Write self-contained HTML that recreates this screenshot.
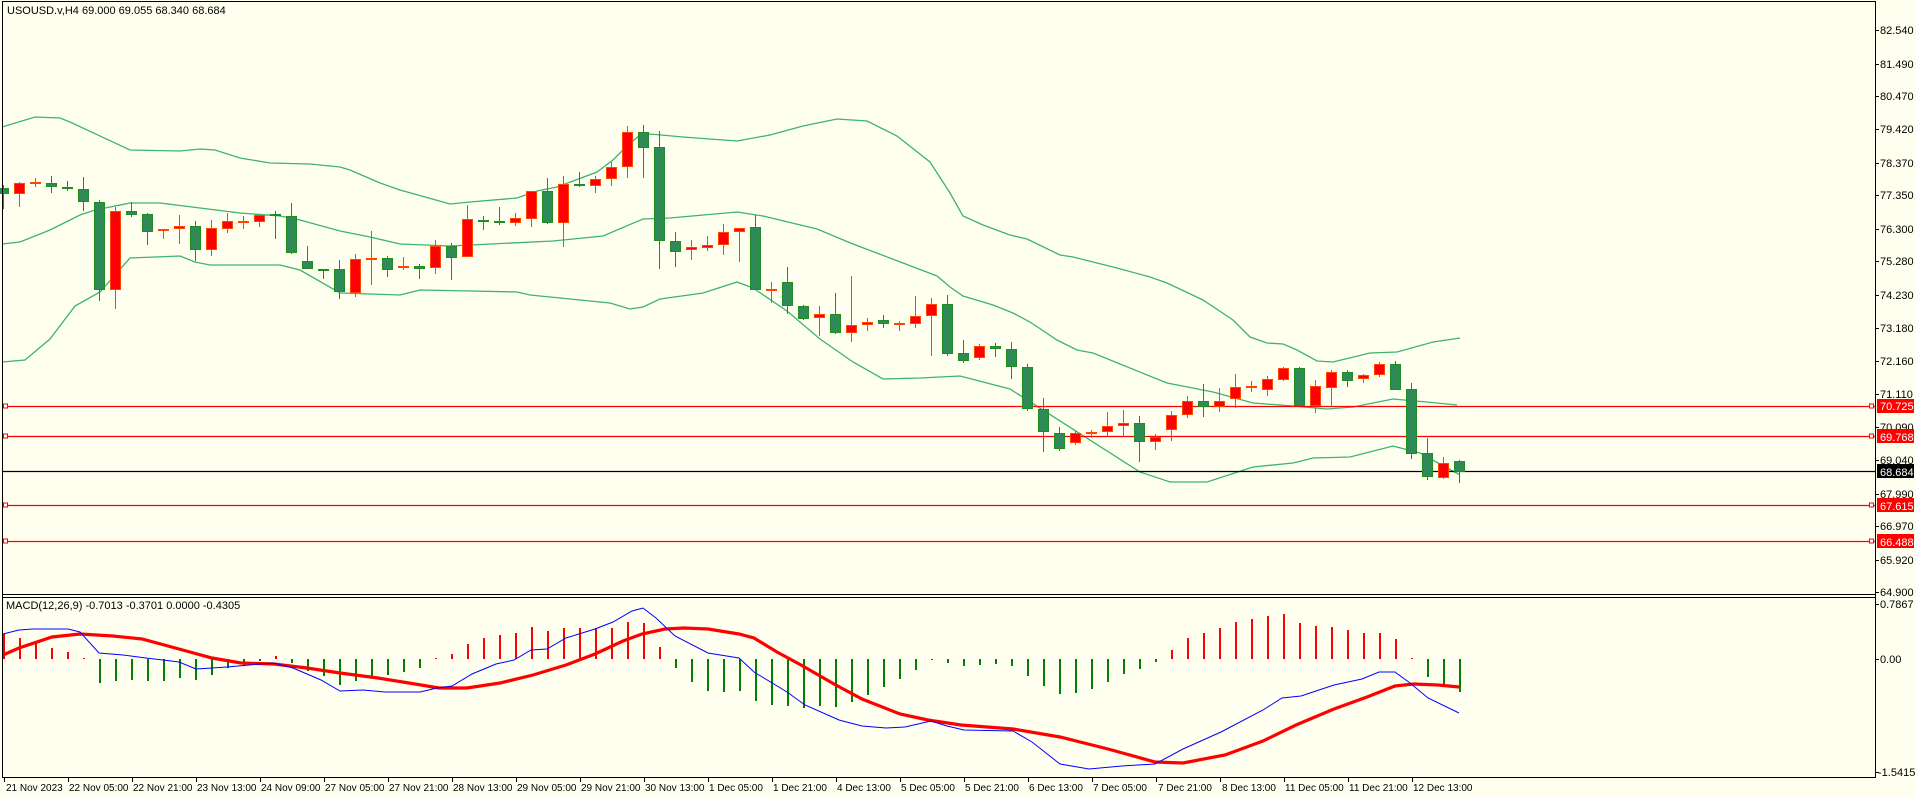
<!DOCTYPE html>
<html><head><meta charset="utf-8">
<style>
html,body{margin:0;padding:0;background:#FFFFF0;}
svg{display:block;}
text{font-family:"Liberation Sans",sans-serif;font-size:11px;fill:#000;}
#tl text{font-size:10px;}
</style></head>
<body>
<svg id="s" width="1916" height="798" viewBox="0 0 1916 798" xmlns="http://www.w3.org/2000/svg">
<rect width="1916" height="798" fill="#FFFFF0"/>
<g id="bands" fill="none" stroke="#3CB371" stroke-width="1.3"></g>
<g id="levels"></g>
<g id="candles" shape-rendering="crispEdges"></g>
<g id="macd"></g>
<g stroke="#000" stroke-width="1" shape-rendering="crispEdges" fill="none">
<line x1="2.5" y1="1" x2="2.5" y2="777"/>
<line x1="2" y1="1.5" x2="1876" y2="1.5"/>
<line x1="1875.5" y1="1" x2="1875.5" y2="778"/>
<line x1="2" y1="594.5" x2="1876" y2="594.5"/>
<line x1="2" y1="597.5" x2="1876" y2="597.5"/>
<line x1="2" y1="777.5" x2="1876" y2="777.5"/>
</g>
<g id="ticks" stroke="#000" shape-rendering="crispEdges"></g>
<text x="7" y="14">USOUSD.v,H4  69.000 69.055 68.340 68.684</text>
<text x="6" y="609">MACD(12,26,9) -0.7013 -0.3701 0.0000 -0.4305</text>
<g id="plabels">
<text x="1880" y="34">82.540</text>
<text x="1880" y="68">81.490</text>
<text x="1880" y="100">80.470</text>
<text x="1880" y="133">79.420</text>
<text x="1880" y="167">78.370</text>
<text x="1880" y="199">77.350</text>
<text x="1880" y="233">76.300</text>
<text x="1880" y="265">75.280</text>
<text x="1880" y="299">74.230</text>
<text x="1880" y="332">73.180</text>
<text x="1880" y="365">72.160</text>
<text x="1880" y="398">71.110</text>
<text x="1880" y="431">70.090</text>
<text x="1880" y="464">69.040</text>
<text x="1880" y="498">67.990</text>
<text x="1880" y="530">66.970</text>
<text x="1880" y="564">65.920</text>
<text x="1880" y="596">64.900</text>
<text x="1880" y="608">0.7867</text>
<text x="1880" y="663">0.00</text>
<text x="1878" y="776">-1.5415</text>
</g>
<g id="lvlbox"></g>
<g fill="#fff">
<text x="1880" y="410" style="fill:#fff">70.725</text>
<text x="1880" y="441" style="fill:#fff">69.768</text>
<text x="1880" y="476" style="fill:#fff">68.684</text>
<text x="1880" y="510" style="fill:#fff">67.615</text>
<text x="1880" y="546" style="fill:#fff">66.488</text>
</g>
<g id="tl">
<text x="6" y="791">21 Nov 2023</text>
<text x="69" y="791">22 Nov 05:00</text>
<text x="133" y="791">22 Nov 21:00</text>
<text x="197" y="791">23 Nov 13:00</text>
<text x="261" y="791">24 Nov 09:00</text>
<text x="325" y="791">27 Nov 05:00</text>
<text x="389" y="791">27 Nov 21:00</text>
<text x="453" y="791">28 Nov 13:00</text>
<text x="517" y="791">29 Nov 05:00</text>
<text x="581" y="791">29 Nov 21:00</text>
<text x="645" y="791">30 Nov 13:00</text>
<text x="709" y="791">1 Dec 05:00</text>
<text x="773" y="791">1 Dec 21:00</text>
<text x="837" y="791">4 Dec 13:00</text>
<text x="901" y="791">5 Dec 05:00</text>
<text x="965" y="791">5 Dec 21:00</text>
<text x="1029" y="791">6 Dec 13:00</text>
<text x="1093" y="791">7 Dec 05:00</text>
<text x="1158" y="791">7 Dec 21:00</text>
<text x="1222" y="791">8 Dec 13:00</text>
<text x="1285" y="791">11 Dec 05:00</text>
<text x="1349" y="791">11 Dec 21:00</text>
<text x="1413" y="791">12 Dec 13:00</text>
</g>
</svg>
<script>
var NS="http://www.w3.org/2000/svg";
function el(p,t,a){var e=document.createElementNS(NS,t);for(var k in a)e.setAttribute(k,a[k]);document.getElementById(p).appendChild(e);return e;}
function pts(a){var s="";for(var i=0;i<a.length;i+=2)s+=a[i]+","+a[i+1]+" ";return s;}
var up=[2,127,35,117,60,118,70,122,130,150,180,151,200,149,215,150,240,158,270,163,310,164,340,167,350,170,380,183,400,190,450,204,470,202,517,198,537,191,557,187,597,172,613,160,627,146,640,135,650,134,683,137,737,141,770,135,803,126,837,119,867,121,897,136,930,162,950,193,963,216,983,225,1010,235,1027,239,1060,255,1073,257,1117,268,1150,277,1167,283,1203,300,1233,320,1250,337,1267,343,1283,344,1297,350,1317,361,1333,362,1370,353,1397,352,1433,342,1460,338];
var md=[2,244,20,242,50,230,80,215,95,210,130,203,160,203,200,208,240,213,280,216,300,220,340,231,370,237,400,244,450,246,553,241,603,236,643,219,670,218,737,212,763,216,817,229,853,244,903,263,937,276,950,287,963,296,993,305,1013,313,1030,322,1057,340,1077,350,1093,353,1167,383,1213,392,1253,403,1293,406,1327,409,1353,407,1393,399,1427,402,1457,405];
var lo=[2,362,25,360,50,339,75,306,100,292,130,258,180,256,195,262,210,265,280,265,300,270,340,293,400,295,420,290,470,291,517,292,530,295,610,303,630,309,643,307,660,299,703,293,737,282,753,288,787,311,820,339,853,362,883,379,920,378,960,376,1010,389,1140,472,1170,482,1207,482,1253,467,1293,463,1313,458,1350,457,1393,446,1420,453,1460,475];
[up,md,lo].forEach(function(a){el("bands","polyline",{points:pts(a)});});
[[406.5,"#f00"],[436.5,"#f00"],[471.5,"#000"],[505.5,"#f00"],[541.5,"#f00"]].forEach(function(l){
 el("levels","line",{x1:3,x2:1875,y1:l[0],y2:l[0],stroke:l[1],"stroke-width":1.3});
 if(l[1]=="#f00"){
  el("levels","rect",{x:3.5,y:l[0]-2.5,width:4,height:4,fill:"#fff",stroke:"#f00"});
  el("levels","rect",{x:1869.5,y:l[0]-2.5,width:4,height:4,fill:"#fff",stroke:"#f00"});
 }
 el("lvlbox","rect",{x:1877,y:l[0]-7.5,width:37,height:14,fill:l[1]});
});
var C="g 185 188 194 209|r 182 183 194 207|r 178 182 183 187|g 176 183 187 193|g 181 187 189 191|g 177 189 202 211|g 200 202 290 301|r 207 211 290 309|g 202 211 215 217|g 213 214 232 245|r 229 229 231 239|r 215 226 229 244|g 221 226 250 261|r 220 228 250 256|r 213 221 229 233|r 216 221 222 229|r 214 215 222 227|g 211 214 216 239|g 203 216 253 254|g 246 261 269 269|g 269 269 270 279|g 260 269 292 299|r 254 259 293 297|r 231 258 259 285|g 256 258 270 277|r 257 266 267 270|g 264 266 269 279|r 240 246 268 274|g 243 246 258 280|r 205 219 257 257|g 216 220 222 230|g 207 221 223 225|r 213 218 223 226|r 191 191 219 227|g 178 191 223 224|r 176 184 223 247|g 172 184 186 187|r 176 179 186 193|r 162 167 179 186|r 126 132 167 178|g 125 132 148 178|g 131 147 241 269|g 232 241 252 267|r 240 247 250 260|r 236 245 248 251|r 224 232 245 255|r 228 228 232 262|g 215 227 290 290|r 282 289 290 303|g 267 282 306 314|g 305 306 319 320|r 306 314 318 336|g 293 314 333 334|r 276 325 333 342|r 318 322 325 331|g 315 320 324 328|r 321 323 324 331|r 296 316 324 328|r 298 304 316 356|g 295 304 354 356|g 340 353 361 363|r 344 346 358 360|g 343 346 349 357|g 342 349 367 379|g 364 367 409 411|g 398 409 432 452|g 427 433 449 451|r 431 433 443 445|r 430 432 433 438|r 412 426 432 437|r 410 423 426 437|g 416 423 442 462|r 434 437 442 450|r 411 415 430 441|r 396 401 415 418|g 384 401 407 417|r 388 401 407 412|r 374 387 399 408|r 381 386 387 392|r 376 379 390 396|r 367 368 380 381|g 367 368 406 407|r 380 386 406 413|r 370 372 388 407|g 370 372 381 387|r 374 375 379 383|r 362 364 375 377|g 361 364 390 390|g 383 389 454 459|g 438 453 477 480|r 457 463 478 479|g 460 461 472 483".split("|");
C.forEach(function(s,i){
 var p=s.split(" "),c=3+16*i,wt=+p[1],bt=+p[2],bb=+p[3],wb=+p[4];
 var g=p[0]=="g",st=g?"#228B22":"#FF4500",fl=g?"#2E8B57":"#FF0000";
 var x=c+0.5;
 el("candles","line",{x1:x,x2:x,y1:wt,y2:wb,stroke:st,"stroke-width":1});
 if(bb-bt<=2){
  el("candles","rect",{x:c-5,y:bt,width:11,height:2,fill:st});
 } else {
  el("candles","rect",{x:c-4.5,y:bt+0.5,width:10,height:bb-bt-1,fill:fl,stroke:st,"stroke-width":1});
 }
});
var H=[634,638,643,648,652,658,683,681,680,681,681,678,680,675,668,665,661,656,663,671,676,685,681,676,675,672,668,658,654,644,638,635,633,627,631,628,628,628,628,622,623,647,668,682,691,692,691,701,705,706,708,706,707,702,695,687,679,670,660,663,666,665,664,666,676,686,694,693,689,682,674,669,662,650,638,633,628,622,619,616,614,623,626,627,630,633,633,639,658,677,686,692];
H.forEach(function(v,i){
 var c=3+16*i+1;
 var y1=Math.min(659,v),y2=Math.max(659,v);
 if(y2-y1<1){y2=y1+1;}
 el("macd","line",{x1:c,x2:c,y1:y1,y2:y2,stroke:v<659?"#FF0000":"#008000","stroke-width":2});
});
var blue=[3,634,19,630,33,629,68,629,80,632,99,653,123,655,146,658,163,660,179,662,196,669,212,668,227,667,260,664,274,663,293,668,321,680,340,691,363,690,385,692,420,692,437,688,452,686,472,674,496,664,514,660,531,650,547,649,566,638,595,629,613,622,632,611,643,608,656,618,675,636,708,653,739,658,754,672,787,692,805,705,839,720,862,726,886,728,905,727,931,721,947,726,964,730,1013,731,1032,742,1060,764,1089,769,1122,766,1155,764,1183,749,1221,732,1263,710,1282,698,1301,696,1334,685,1362,679,1379,672,1395,672,1410,683,1428,698,1459,713];
var red=[3,655,19,648,52,637,80,634,113,636,142,639,179,649,212,658,241,663,274,664,307,668,340,673,378,678,415,684,439,688,467,688,500,683,533,675,566,665,595,654,623,641,642,634,665,629,684,628,708,629,739,634,754,638,777,652,801,665,834,684,862,699,900,714,928,720,961,725,1013,729,1060,737,1108,749,1155,762,1183,763,1225,755,1263,741,1296,725,1334,709,1367,697,1395,686,1414,684,1438,685,1459,687];
el("macd","polyline",{points:pts(red),fill:"none",stroke:"#FF0000","stroke-width":3.2});
el("macd","polyline",{points:pts(blue),fill:"none",stroke:"#0000FF","stroke-width":1});
[30,64,96,129,163,195,229,261,295,328,361,394,427,460,494,526,560,592,604,659,772].forEach(function(y){el("ticks","line",{x1:1876,x2:1879,y1:y+0.5,y2:y+0.5});});
for(var k=0;k<23;k++){var x=4+64*k+0.5;el("ticks","line",{x1:x,x2:x,y1:778,y2:782});}
</script>
</body></html>
